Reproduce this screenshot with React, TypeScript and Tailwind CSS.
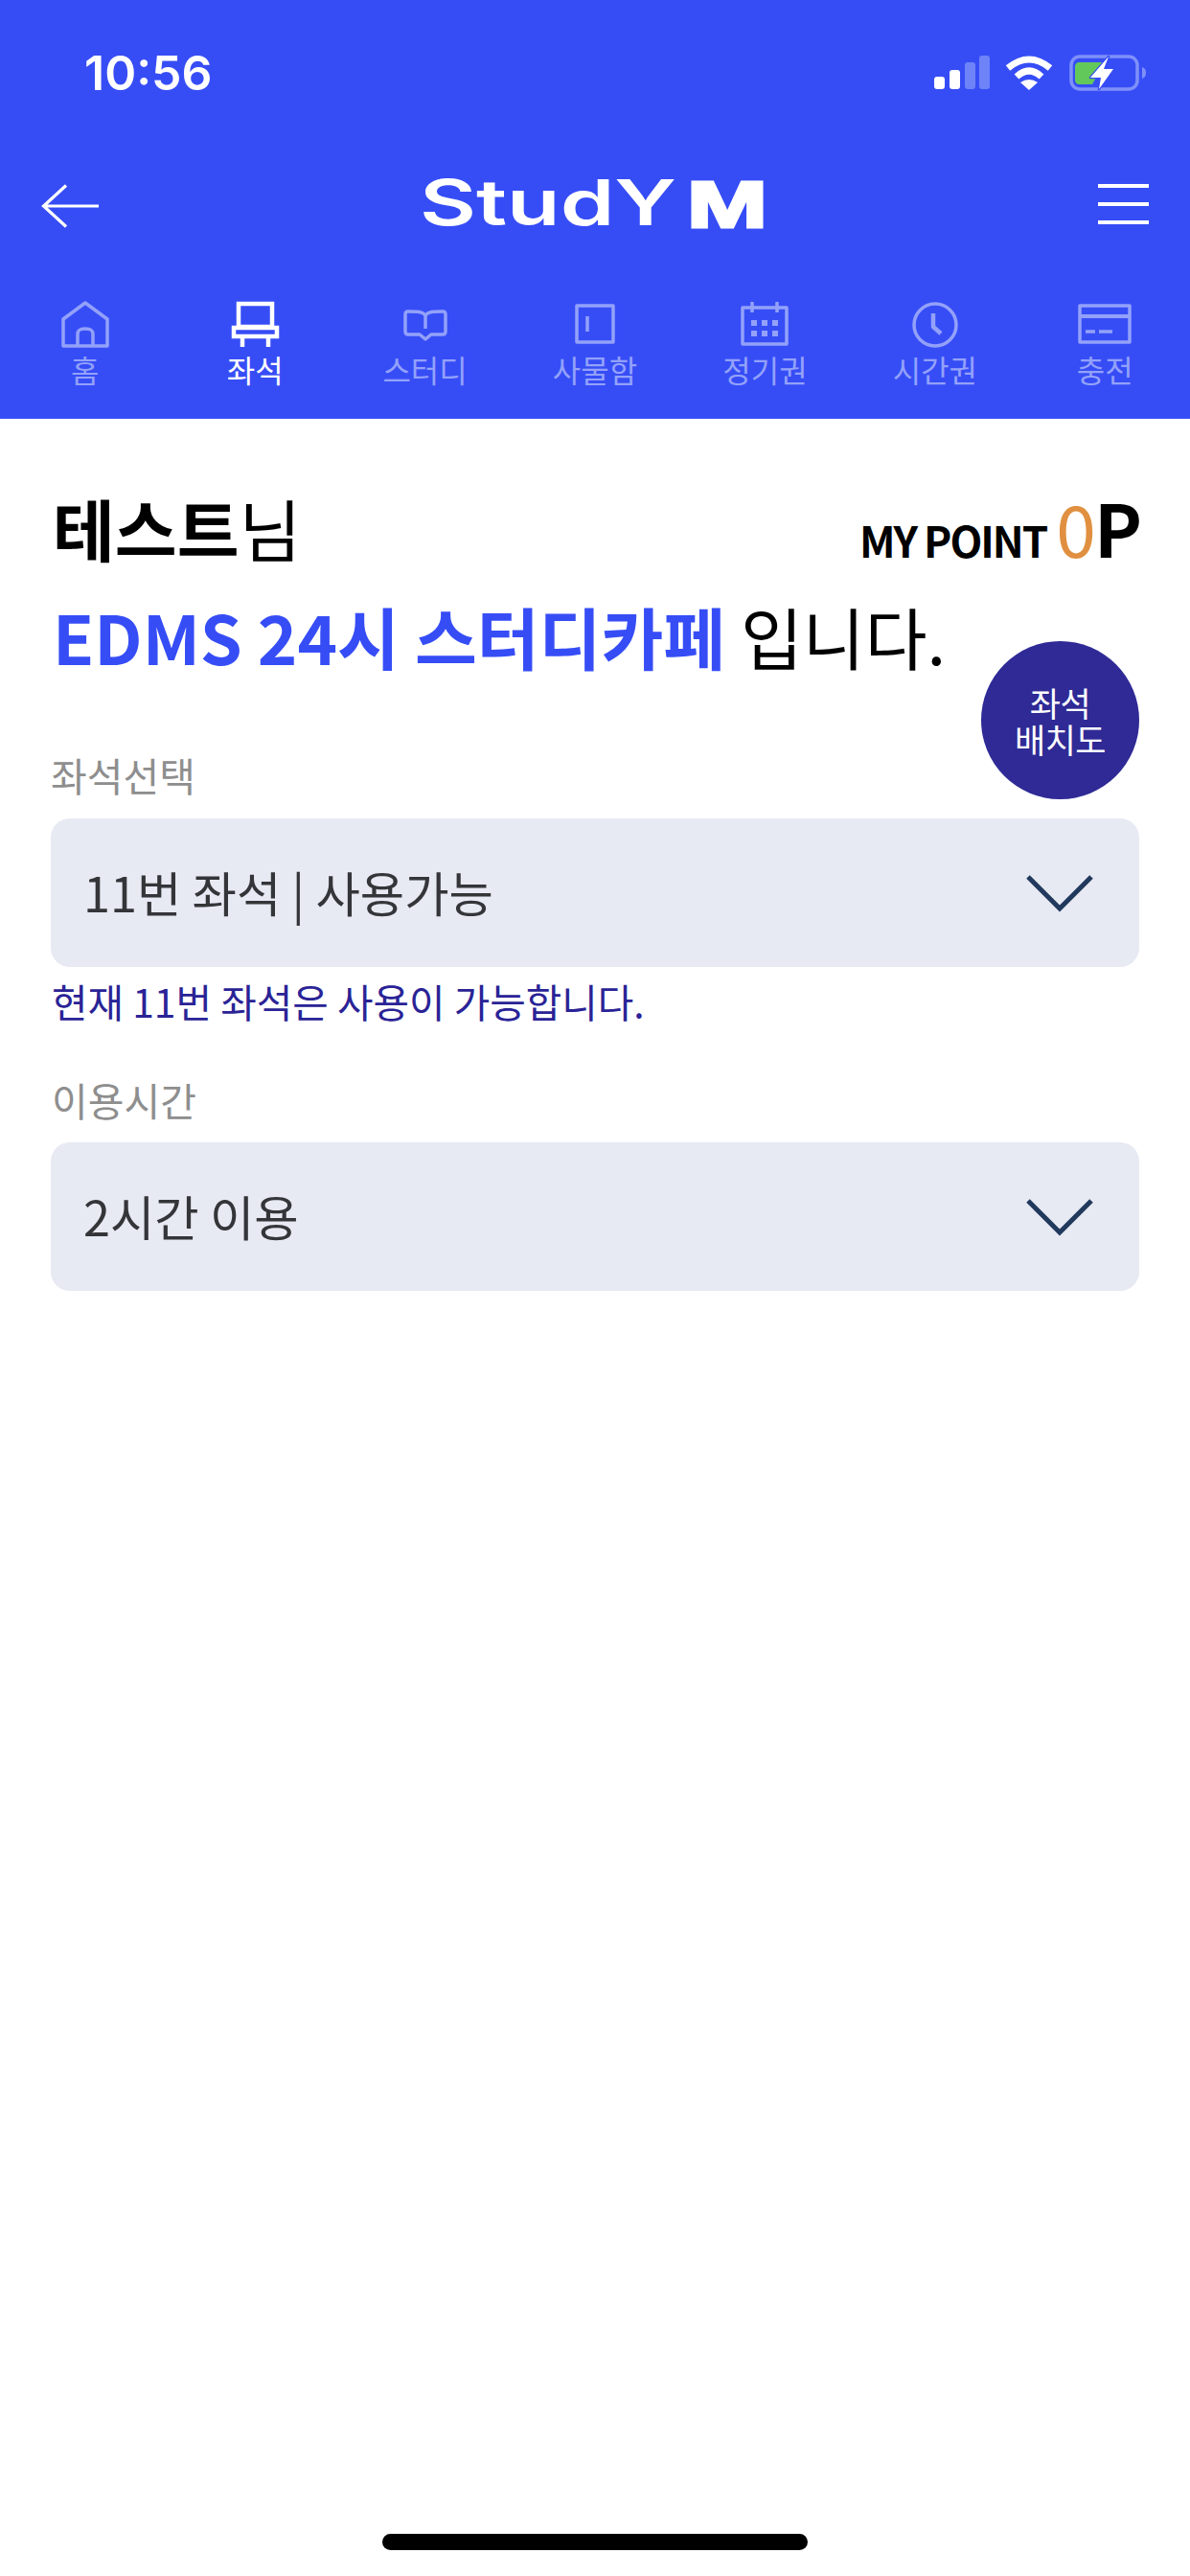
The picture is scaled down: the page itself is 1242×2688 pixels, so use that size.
const navItems = [
  { label: "홈", active: false, icon: "home" },
  { label: "좌석", active: true, icon: "chair" },
  { label: "스터디", active: false, icon: "book" },
  { label: "사물함", active: false, icon: "locker" },
  { label: "정기권", active: false, icon: "calendar" },
  { label: "시간권", active: false, icon: "clock" },
  { label: "충전", active: false, icon: "card" },
];

function NavIcon({ name }: { name: string }) {
  const p = {
    fill: "none",
    stroke: "currentColor",
    strokeWidth: 3.5,
    strokeLinejoin: "round" as const,
    strokeLinecap: "butt" as const,
  };
  return (
    <svg width="60" height="50" viewBox="0 0 60 50" className="block">
      {name === "home" && (
        <g {...p}>
          <path d="M7 48V20L30 3L53 20V48Z" />
          <path d="M22 48V36C22 31 25 30 30 30C35 30 38 31 38 36V48" />
        </g>
      )}
      {name === "chair" && (
        <g {...p} strokeWidth={4.5} strokeLinejoin="miter">
          <path d="M13 4H48V28H13Z" />
          <path d="M8 29H53V38H8Z" />
          <path d="M17 38V49M44 38V49" />
        </g>
      )}
      {name === "book" && (
        <g {...p}>
          <path d="M30 16C27 12 22 12 12 12C10 12 9 13 9 15V33C9 35 10 36 12 36H24L30 41L36 36H48C50 36 51 35 51 33V15C51 13 50 12 48 12C38 12 33 12 30 16Z" />
          <path d="M30 16V30" />
        </g>
      )}
      {name === "locker" && (
        <g {...p}>
          <path d="M11 6H49V44H11Z" />
          <path d="M22 17V33" />
        </g>
      )}
      {name === "calendar" && (
        <g {...p}>
          <path d="M7 8H53V46H7Z" />
          <path d="M17 2V13M43 2V13" />
          <path d="M16 24H22M27 24H33M38 24H44M16 35H22M27 35H33M38 35H44" strokeWidth={6} />
        </g>
      )}
      {name === "clock" && (
        <g {...p}>
          <circle cx="30" cy="26" r="22" />
          <path d="M28 14V28L36 35" strokeWidth={4.5} />
        </g>
      )}
      {name === "card" && (
        <g {...p}>
          <path d="M4 6H56V44H4Z" />
          <path d="M4 17H56" strokeWidth={4} />
          <path d="M10 33H20M24 33H38" />
        </g>
      )}
    </svg>
  );
}

function Chevron() {
  return (
    <svg width="70" height="40" viewBox="0 0 70 40" className="block">
      <path d="M2 3L35 36L68 3" fill="none" stroke="#21395c" strokeWidth="5" />
    </svg>
  );
}

function Select({ text }: { text: string }) {
  return (
    <div className="flex h-[155px] items-center justify-between rounded-[20px] bg-[#e7e9f3] pl-[34px] pr-[48px]">
      <span className="text-[50.4px] leading-none text-[#333538]">{text}</span>
      <Chevron />
    </div>
  );
}

export default function App() {
  return (
    <div
      className="relative flex h-[2688px] w-[1242px] flex-col overflow-hidden bg-white"
      style={{ fontFamily: '"Noto Sans CJK KR", "Noto Sans", sans-serif' }}
    >
      <header className="h-[437px] bg-[#364df6] text-white">
        <div className="flex h-[152px] items-center justify-between pl-[88px] pr-[44px]">
          <span
            className="text-[50px] font-semibold leading-none"
            style={{ fontFamily: "Inter, sans-serif" }}
          >
            10:56
          </span>
          <div className="flex items-center">
            <svg width="58" height="36" viewBox="0 0 58 36" className="block">
              <rect x="0" y="22" width="11" height="13" rx="3" fill="#fff" />
              <rect x="16" y="15" width="11" height="20" rx="3" fill="#fff" />
              <rect x="32" y="7" width="11" height="28" rx="3" fill="#6f83f8" />
              <rect x="47" y="0" width="11" height="35" rx="3" fill="#6f83f8" />
            </svg>
            <svg width="50" height="38" viewBox="0 0 50 38" className="ml-[16px] block">
              <path d="M3 14Q25 -4 47 14" fill="none" stroke="#fff" strokeWidth="7" />
              <path d="M12 23Q25 11 38 23" fill="none" stroke="#fff" strokeWidth="7" />
              <path d="M25 37L16 29Q25 23 34 29Z" fill="#fff" />
            </svg>
            <svg width="82" height="40" viewBox="0 0 82 40" className="ml-[17px] block">
              <rect x="2" y="3" width="69" height="34" rx="9" fill="none" stroke="#7f90fa" strokeWidth="3.5" />
              <path d="M76 14C79 15 80 17 80 20C80 23 79 25 76 26Z" fill="#7f90fa" />
              <path d="M10 9H37L24 32H10C8 32 6 30 6 28V13C6 11 8 9 10 9Z" fill="#63c85a" />
              <path d="M41 3L22 25H33L31 37L46 16H36Z" fill="#fff" stroke="#364df6" strokeWidth="2.5" strokeLinejoin="round" paintOrder="stroke" />
            </svg>
          </div>
        </div>

        <div className="flex h-[126px] items-center justify-between pl-[43px] pr-[43px]">
          <svg width="60" height="46" viewBox="0 0 60 46" className="block">
            <path d="M60 23H3M26 1.5L2.5 23L26 44.5" fill="none" stroke="#fff" strokeWidth="3.2" />
          </svg>
          <svg width="356" height="56" viewBox="0 0 356 56" className="mr-[7px] block overflow-visible">
            <text
              x="-5"
              y="48"
              fill="#fff"
              textLength="268"
              lengthAdjust="spacingAndGlyphs"
              style={{ fontFamily: "Inter, sans-serif", fontSize: 66, fontWeight: 600 }}
            >
              StudY
            </text>
            <text
              x="274"
              y="50"
              fill="#fff"
              textLength="84"
              lengthAdjust="spacingAndGlyphs"
              style={{ fontFamily: '"Liberation Sans", sans-serif', fontSize: 68, fontWeight: 700, stroke: "#fff", strokeWidth: 3 }}
            >
              M
            </text>
          </svg>
          <div className="mb-[5px] flex w-[53px] flex-col gap-[15px]">
            <div className="h-[4px] bg-white" />
            <div className="h-[4px] bg-white" />
            <div className="h-[4px] bg-white" />
          </div>
        </div>

        <nav className="grid grid-cols-7 pt-[35px]">
          {navItems.map((item) => (
            <div
              key={item.label}
              className={
                item.active
                  ? "flex flex-col items-center text-white"
                  : "flex flex-col items-center text-[#93a1fa]"
              }
            >
              <NavIcon name={item.icon} />
              <span className="mt-[2px] text-[32px] leading-[40px]">{item.label}</span>
            </div>
          ))}
        </nav>
      </header>

      <main className="relative flex-1 px-[53px]">
        <div className="flex items-start justify-between pt-[68px]">
          <div className="pl-[2px] text-[70.5px] leading-[90px] text-black">
            <b className="font-bold">테스트</b>님
          </div>
          <div className="-mr-[3px] flex items-baseline text-black">
            <span className="text-[44px] font-bold leading-[90px] tracking-[-2px]">MY POINT</span>
            <span className="ml-[10px] text-[75px] leading-[90px] text-[#e09040]">0</span>
            <span className="-ml-[2px] text-[75px] font-bold leading-[90px]">P</span>
          </div>
        </div>
        <div className="mt-[10px] w-fit pl-[2px] text-[70.5px] leading-[90px] text-black">
          <b className="font-bold text-[#364df6]">EDMS 24시 스터디카페</b> 입니다.
        </div>

        <div className="mt-[72px] w-fit text-[41px] leading-[56px] text-[#8e8e8e]">좌석선택</div>
        <div className="mt-[18px]">
          <Select text="11번 좌석 | 사용가능" />
        </div>
        <div className="mt-[10px] pl-[1px] text-[40.8px] leading-[52px] text-[#2a2396]">
          현재 11번 좌석은 사용이 가능합니다.
        </div>
        <div className="mt-[48px] pl-[1px] text-[41px] leading-[56px] text-[#8e8e8e]">이용시간</div>
        <div className="mt-[17px]">
          <Select text="2시간 이용" />
        </div>

        <div className="absolute left-[1024px] top-[232px] flex h-[165px] w-[165px] items-center justify-center rounded-full bg-[#2f2a96] text-center text-[35px] leading-[38px] tracking-[-0.5px] text-white">
          <div>
            좌석
            <br />
            배치도
          </div>
        </div>
      </main>

      <div className="absolute bottom-[27px] left-[399px] h-[17px] w-[444px] rounded-full bg-black" />
    </div>
  );
}
